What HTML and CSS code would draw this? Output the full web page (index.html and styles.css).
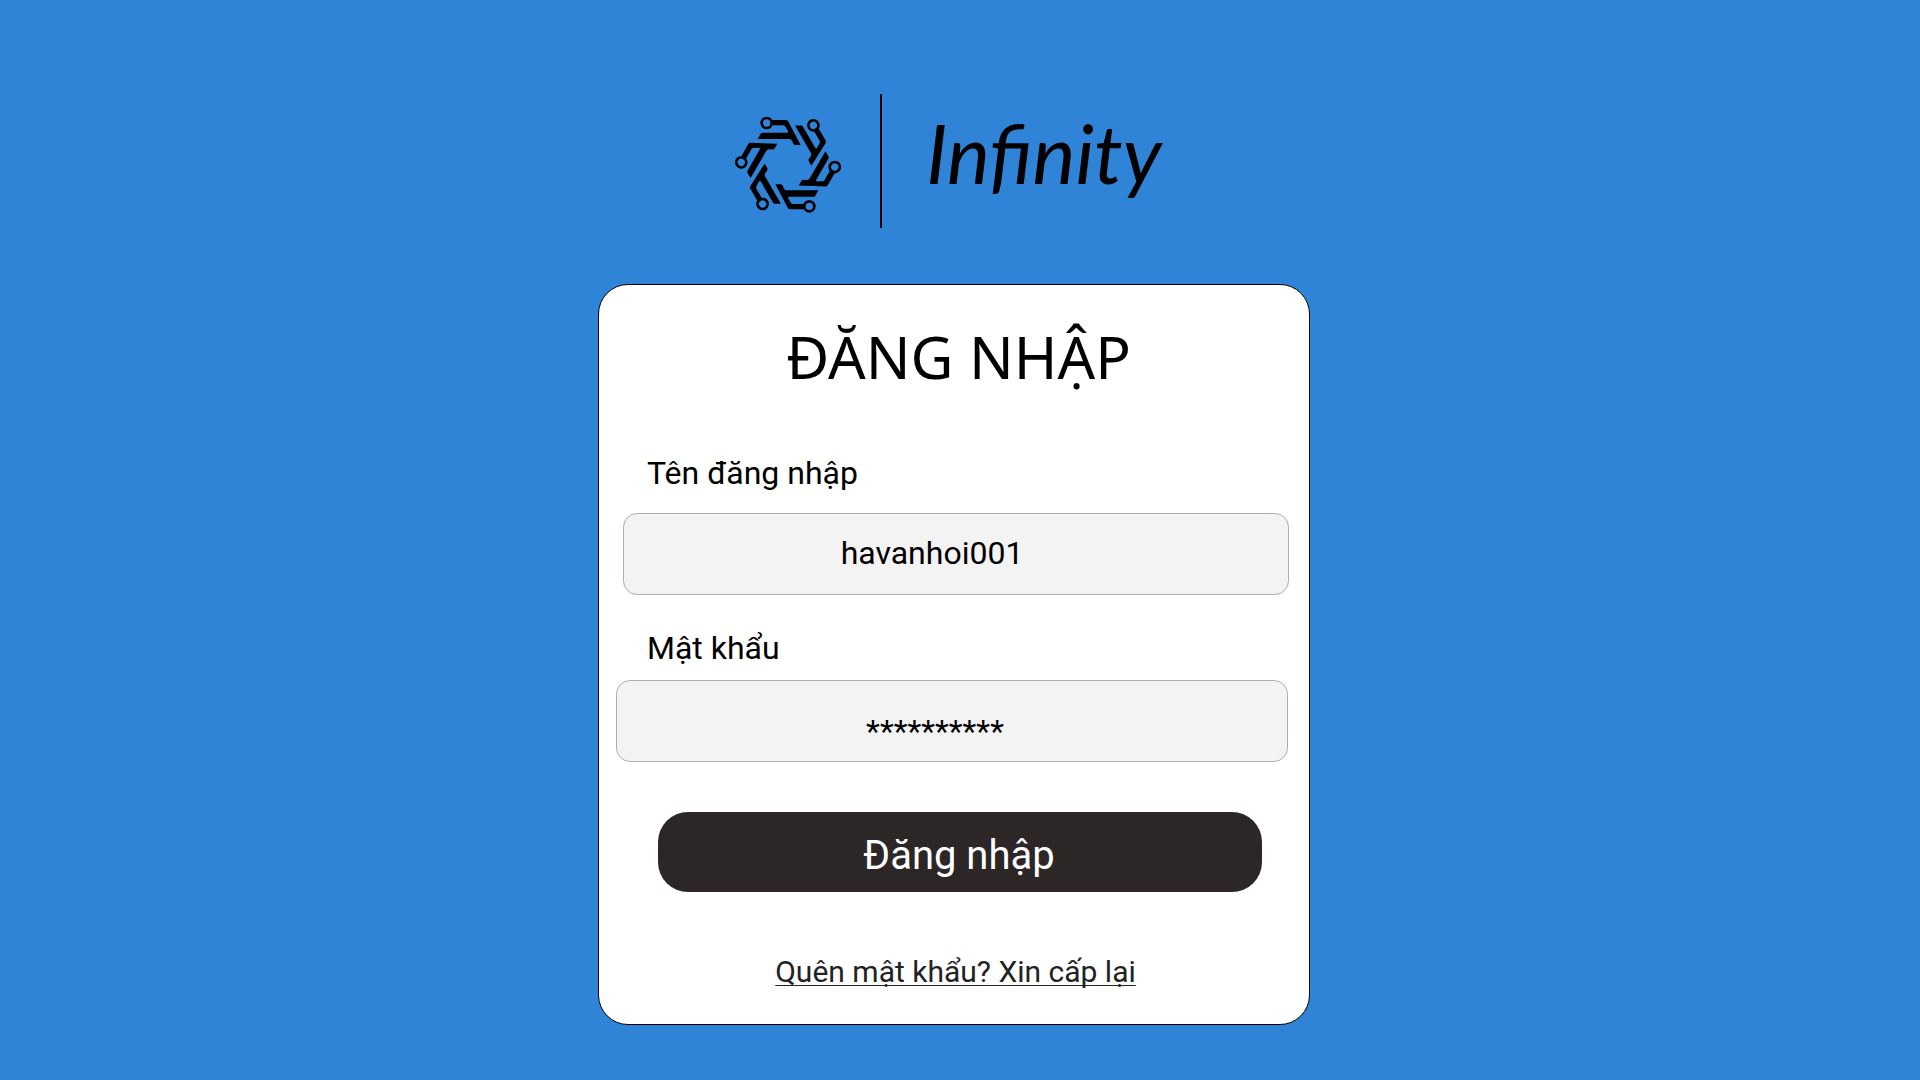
FILE: index.html
```html
<!DOCTYPE html>
<html lang="vi">
<head>
<meta charset="utf-8">
<meta name="viewport" content="width=device-width, initial-scale=1">
<title>Infinity</title>
<link rel="stylesheet" href="styles.css">
</head>
<body>
<div class="page">
  <header class="brand">
    <svg class="brand-mark" viewBox="30 36 318 294" aria-hidden="true">
      <defs>
        <g id="arm">
          <circle cx="125" cy="57" r="15" fill="none" stroke="#000" stroke-width="8"/>
          <path d="M141 48H183Q187 48 189 51L227 123H212Q207 123 205 119L201 110Q198 105 192 105H98L107 89Q109 86 113 86H184Q191 86 189 81L180 67Q178 64 174 64H141Z"/>
        </g>
      </defs>
      <use href="#arm"/>
      <use href="#arm" transform="rotate(60 189 182)"/>
      <use href="#arm" transform="rotate(120 189 182)"/>
      <use href="#arm" transform="rotate(180 189 182)"/>
      <use href="#arm" transform="rotate(240 189 182)"/>
      <use href="#arm" transform="rotate(300 189 182)"/>
    </svg>
    <span class="brand-divider"></span>
    <span class="brand-name">Infinity</span>
  </header>

  <main class="card">
    <h1 class="title">ĐĂNG NHẬP</h1>
    <form class="form">
      <div class="field field-user">
        <label class="label" for="username">Tên đăng nhập</label>
        <input class="input" id="username" type="text" value="havanhoi001">
      </div>
      <div class="field field-pass">
        <label class="label" for="password">Mật khẩu</label>
        <input class="input" id="password" type="text" value="**********" autocomplete="off">
      </div>
      <button class="submit" type="button">Đăng nhập</button>
      <a class="forgot" href="#">Quên mật khẩu? Xin cấp lại</a>
    </form>
  </main>
</div>
</body>
</html>
```
FILE: styles.css
```css
* {
  box-sizing: border-box;
}

body {
  margin: 0;
  min-height: 100vh;
  background: #2f84d8;
  color: #000;
  font-family: Roboto, "Noto Sans", sans-serif;
}

.page {
  display: flex;
  flex-direction: column;
  align-items: center;
  gap: 56px;
  padding: 94px 12px 55px 0;
}

.brand {
  display: flex;
  align-items: center;
  width: 100%;
  max-width: 712px;
  padding-left: 137px;
}

.brand-mark {
  width: 106px;
  height: 98px;
  margin-top: 8px;
}

.brand-divider {
  width: 2px;
  height: 134px;
  margin: 0 44px 0 39px;
  background: #000;
}

.brand-name {
  font: italic 81px/96px Lato, sans-serif;
  margin-bottom: 16px;
}

.card {
  width: 100%;
  max-width: 712px;
  padding: 31px 20px 32px 17px;
  border: 1px solid #000;
  border-radius: 30px;
  background: #fff;
}

.title {
  margin: 0 0 57px 12px;
  font: 400 59px/80px "Noto Sans", sans-serif;
  text-align: center;
}

.form {
  display: flex;
  flex-direction: column;
}

.field {
  display: flex;
  flex-direction: column;
}

.field-user {
  gap: 20px;
  margin: 0 0 33px 7px;
}

.field-pass {
  gap: 12px;
  margin: 0 1px 50px 0;
}

.label {
  font-size: 32px;
  line-height: 40px;
}

.field-user .label {
  padding-left: 24px;
}

.field-pass .label {
  padding-left: 31px;
}

.input {
  width: 100%;
  height: 82px;
  padding: 0 48px 2px 0;
  border: 1px solid #b5abad;
  border-radius: 14px;
  background: #f3f3f3;
  color: #000;
  font: 32px/40px Roboto, sans-serif;
  text-align: center;
}

.field-pass .input {
  padding: 20px 34px 0 0;
}

.submit {
  height: 80px;
  margin: 0 27px 60px 42px;
  padding: 8px 2px 0 0;
  border: 0;
  border-radius: 30px;
  background: #2d2627;
  color: #fff;
  font: 40px/48px Roboto, sans-serif;
}

.forgot {
  align-self: center;
  margin-left: 6px;
  color: #222;
  font-size: 30px;
  line-height: 40px;
  text-decoration-thickness: 1px;
  text-underline-offset: 3px;
  text-decoration-skip-ink: none;
}
```
